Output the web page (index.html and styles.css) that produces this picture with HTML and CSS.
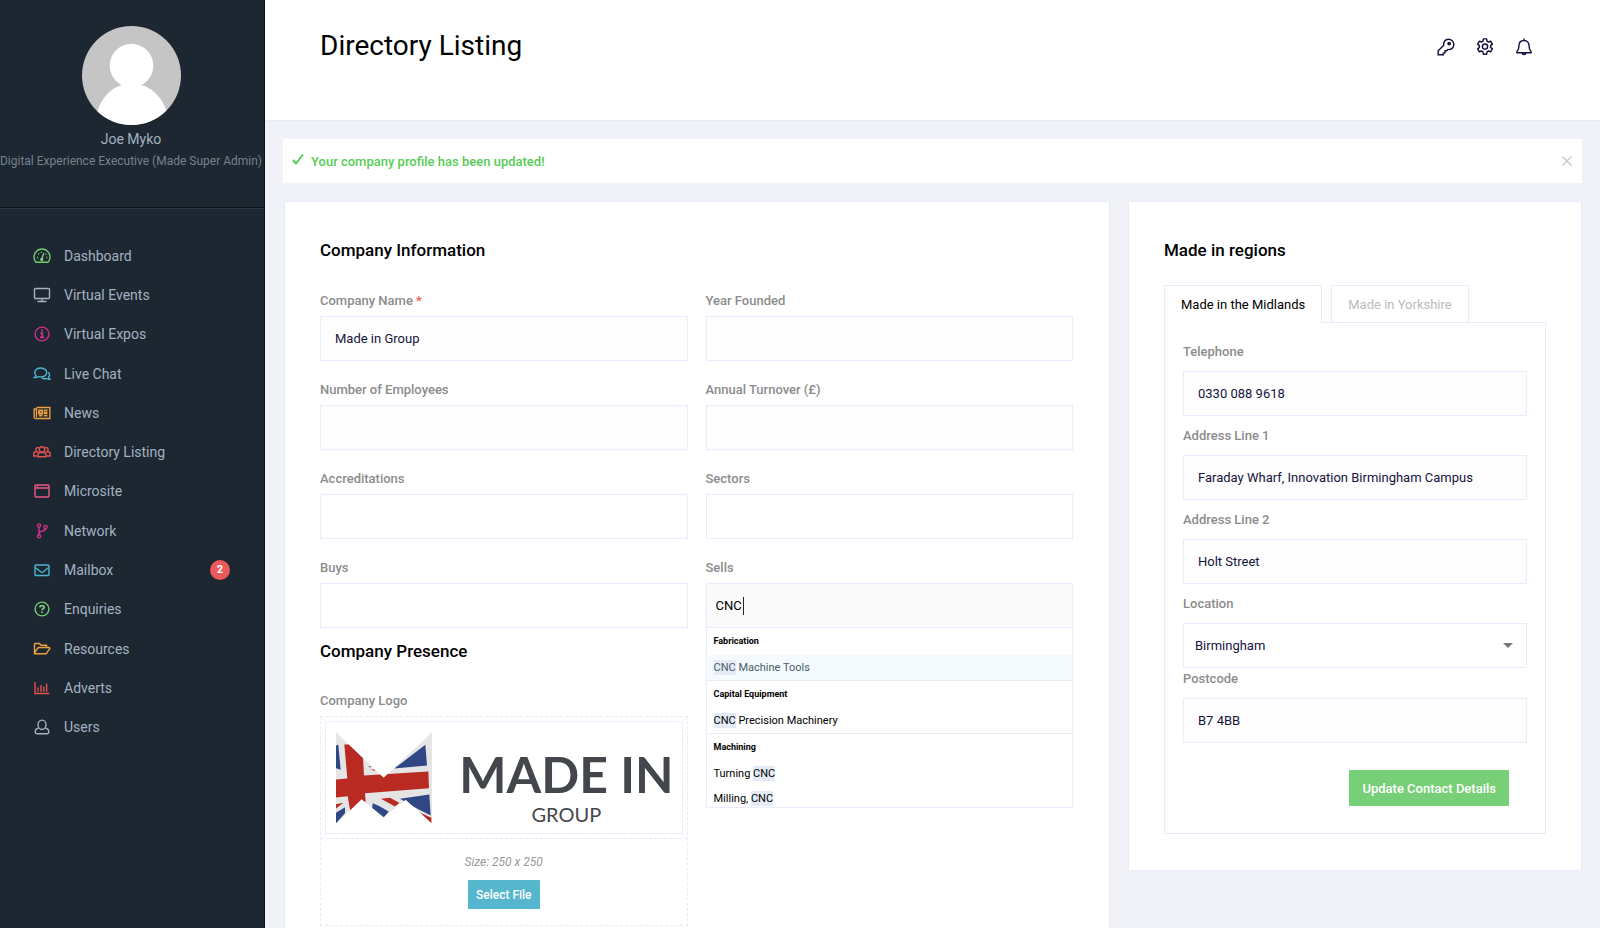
FILE: index.html
```html
<!DOCTYPE html>
<html lang="en">
<head>
  <meta charset="UTF-8" />
  <meta name="viewport" content="width=device-width, initial-scale=1.0" />
  <title>Directory Listing</title>
  <link rel="stylesheet" href="styles.css">
</head>
<body>
  <aside class="sidebar">
    <div class="profile">
      <svg class="avatar" viewBox="0 0 100 100" aria-hidden="true">
        <clipPath id="avatarClip"><circle cx="50" cy="50" r="50"/></clipPath>
        <g clip-path="url(#avatarClip)">
          <rect width="100" height="100" fill="#c5c5c5"/>
          <circle cx="50" cy="40" r="22" fill="#fff"/>
          <path d="M15 88C20 70 33 58 50 58s31 12 36 30v14H15z" fill="#fff"/>
        </g>
      </svg>
      <div class="profile-name">Joe Myko</div>
      <div class="profile-role">Digital Experience Executive (Made Super Admin)</div>
    </div>
    <nav class="menu">
      <a href="#" class="green">
        <svg viewBox="0 0 18 18"><path d="M3 15.300h12a8 8 0 1 0-12 0z"/><path d="M8.500 13l2.300-7M4 10.500h1M13.300 10.500h1M5.300 6.500l.8.8M8.400 4.800v1M12.600 7.400l.7-.7" /><circle cx="8.800" cy="12.500" r="1"/></svg>
        <span>Dashboard</span>
      </a>
      <a href="#">
        <svg viewBox="0 0 18 18"><rect x="1.500" y="2.500" width="15" height="10" rx="1"/><path d="M9 12.500v3M4.500 15.500h9"/></svg>
        <span>Virtual Events</span>
      </a>
      <a href="#" class="magenta">
        <svg viewBox="0 0 18 18"><circle cx="9" cy="9" r="6.900"/><path d="M7.300 8h2v4.500M7 12.400h4.200" stroke-width="1.700"/><path d="M8.200 5.500h1.800" stroke-width="2"/></svg>
        <span>Virtual Expos</span>
      </a>
      <a href="#" class="cyan">
        <svg viewBox="0 0 18 18"><path d="M1.300 12.600c.9-.6 1.400-1.300 1.600-2.200C.4 7.400 2.600 3 7.500 3s6.600 3 6.100 5.300c-.6 2.800-4.200 4.200-8 3.300-1.200.7-2.500 1.100-4.300 1z"/><path d="M15 7.300c2 1.500 2 3.500.5 5 .2.900.7 1.500 1.500 2.100-1.500 0-2.600-.2-3.600-.9-1.800.4-3.600.1-4.800-.7"/></svg>
        <span>Live Chat</span>
      </a>
      <a href="#" class="orange">
        <svg viewBox="0 0 18 18"><path d="M3.500 3.500h13.300v11H2.500a1.300 1.300 0 0 1-1.300-1.300V5h2.300v8"/><path d="M6 6.500h3.500v3H6zM11 6.500h3.500M11 9h3.500M6 11.700h3.500M11 11.700h3.500" stroke-width="1.800"/></svg>
        <span>News</span>
      </a>
      <a href="#" class="red">
        <svg viewBox="0 0 18 18"><circle cx="9" cy="6.500" r="2.700"/><path d="M5 13.800V12c0-1.500 1-2.500 2.300-2.500h3.400c1.300 0 2.300 1 2.300 2.500v1.800z"/><path d="M5 8.600a2 2 0 1 1 .9-3.700M13 8.600a2 2 0 1 0-.9-3.700M4.500 13H.8v-2.200c0-1.200.8-2 2-2h2M13.500 13h3.700v-2.200c0-1.200-.8-2-2-2h-2"/></svg>
        <span>Directory Listing</span>
      </a>
      <a href="#" class="pink">
        <svg viewBox="0 0 18 18"><rect x="2" y="3" width="14" height="12" rx="1"/><path d="M2 6h14M4 4.500h1"/></svg>
        <span>Microsite</span>
      </a>
      <a href="#" class="magenta">
        <svg viewBox="0 0 18 18"><circle cx="6" cy="3.500" r="1.600"/><circle cx="6" cy="14.300" r="1.600"/><circle cx="12.500" cy="5" r="1.600"/><path d="M6 5v7.700M12.500 6.600c0 3.400-6.500 1.600-6.500 5"/></svg>
        <span>Network</span>
      </a>
      <a href="#" class="cyan">
        <svg viewBox="0 0 18 18"><rect x="2" y="4" width="14" height="10.500" rx="1"/><path d="M2.300 6.500L8 11q1 .8 2 0l5.700-4.500"/></svg>
        <span>Mailbox</span>
        <b class="badge">2</b>
      </a>
      <a href="#" class="green">
        <svg viewBox="0 0 18 18"><circle cx="9" cy="9" r="6.900"/><path d="M6.800 7.300C7 5 11.200 4.900 11.200 7.300c0 1.500-2.200 1.400-2.200 3M9 11.600v1.500" stroke-width="1.800"/></svg>
        <span>Enquiries</span>
      </a>
      <a href="#" class="orange">
        <svg viewBox="0 0 18 18"><path d="M13.500 7.500V5.300H8L6.300 3.500H2.500a1 1 0 0 0-1 1v9.300h11.700l3.600-5.300q.2-1-.8-1H6.200c-.8 0-1.200.2-1.600.8L1.500 13"/></svg>
        <span>Resources</span>
      </a>
      <a href="#" class="red">
        <svg viewBox="0 0 18 18"><path d="M2 3v11.500h14.300M5 8.500v4.300M8 6v6.800M10.800 7.500v5.300M13.600 4.500v8.300"/></svg>
        <span>Adverts</span>
      </a>
      <a href="#">
        <svg viewBox="0 0 18 18"><ellipse cx="9" cy="6.800" rx="4" ry="4.700"/><path d="M5.500 10.300C3.300 10.600 2.200 12 2.200 14c0 1.200.7 1.700 1.500 1.700h10.600c.8 0 1.500-.5 1.500-1.700 0-2-1.100-3.400-3.300-3.700"/></svg>
        <span>Users</span>
      </a>
    </nav>
  </aside>

  <div class="page">
    <header class="topbar">
      <h1>Directory Listing</h1>
      <div class="topbar-actions">
        <button type="button" aria-label="Password">
          <svg viewBox="0 0 20 20"><path d="M1.300 18.700v-4.500l6.200-6.200C6.800 4.500 9 1.300 12.700 1.300c3.300 0 6 2.500 6 5.800 0 3.700-2.900 6.300-6.600 5.700l-1.300 1.400H9v1.900l-1.200.9H7v1.700z"/><circle cx="13.500" cy="6.200" r="1.300" fill="#14143c"/></svg>
        </button>
        <button type="button" aria-label="Settings">
          <svg viewBox="0 0 20 20"><path d="M8.200 1h3.600l.5 2.600 1.500.9 2.500-.9 1.900 3.200-2 1.700v1.900l2 1.700-1.900 3.200-2.500-.9-1.500.9-.5 2.700H8.200l-.5-2.700-1.500-.9-2.500.9-1.900-3.200 2-1.700V8.500l-2-1.700 1.900-3.200 2.500.9 1.500-.9z" stroke-linejoin="round"/><circle cx="10" cy="9.500" r="2.900"/></svg>
        </button>
        <button type="button" aria-label="Notifications">
          <svg viewBox="0 0 20 20"><path d="M10 .5v2M2.300 16.300h15.400c.5-.6.3-1.200-.2-1.700-1.600-1.500-1.800-3-1.800-5.500 0-3.600-2-6.400-5.700-6.400S4.300 5.500 4.300 9.100c0 2.500-.2 4-1.800 5.500-.5.500-.7 1.100-.2 1.700zM8 16.500a2 2 0 0 0 4 0"/></svg>
        </button>
      </div>
    </header>

    <main class="content">
      <div class="alert" role="status">
        <svg class="tick" viewBox="0 0 12 12"><path d="M1 7l3 3.500L11 1.500" /></svg>
        <span>Your company profile has been updated!</span>
        <button type="button" class="close" aria-label="Close">
          <svg viewBox="0 0 12 12"><path d="M1.500 1.500l9 9M10.500 1.500l-9 9"/></svg>
        </button>
      </div>

      <div class="columns">
        <section class="card">
          <h2>Company Information</h2>
          <form class="fields">
            <div class="field">
              <label for="name">Company Name <span class="required">*</span></label>
              <input type="text" id="name" value="Made in Group">
            </div>
            <div class="field">
              <label for="founded">Year Founded</label>
              <input type="text" id="founded">
            </div>
            <div class="field">
              <label for="employees">Number of Employees</label>
              <input type="text" id="employees">
            </div>
            <div class="field">
              <label for="turnover">Annual Turnover (£)</label>
              <input type="text" id="turnover">
            </div>
            <div class="field">
              <label for="accreditations">Accreditations</label>
              <input type="text" id="accreditations" class="tags">
            </div>
            <div class="field">
              <label for="sectors">Sectors</label>
              <input type="text" id="sectors" class="tags">
            </div>
            <div class="field">
              <label for="buys">Buys</label>
              <input type="text" id="buys" class="tags">
            </div>
            <div class="field sells">
              <label for="sells">Sells</label>
              <input type="text" id="sells" class="tags active" value="CNC">
              <i class="caret"></i>
              <div class="suggestions">
                <div class="group">
                  <h3>Fabrication</h3>
                  <div class="suggestion selected"><mark>CNC</mark> Machine Tools</div>
                </div>
                <div class="group">
                  <h3>Capital Equipment</h3>
                  <div class="suggestion"><mark>CNC</mark> Precision Machinery</div>
                </div>
                <div class="group">
                  <h3>Machining</h3>
                  <div class="suggestion">Turning <mark>CNC</mark></div>
                  <div class="suggestion">Milling, <mark>CNC</mark></div>
                </div>
              </div>
            </div>
          </form>

          <h2 class="presence">Company Presence</h2>
          <div class="logo-field">
            <div class="label">Company Logo</div>
            <div class="dropzone">
              <div class="preview">
                <div class="logo-frame">
                  <svg class="flag" viewBox="78 125 288 275" aria-hidden="true">
                    <clipPath id="flagClip"><path d="M78 125L221 262 366 125V400L287 328 221 380 155 326 78 400z"/></clipPath>
                    <g clip-path="url(#flagClip)">
                      <path d="M78 125h288v275H78z" fill="#e5e5e5"/>
                      <path d="M78 165l7-2 7 75-14-5zM253 234l93-71 5 62zM270 325l88-13 4 63-40-20zM188 338l18 8 30 17-16 20-34-24zM78 367l27-17v18l-27 30zM176 227l9 1-7 3z" fill="#2f4785"/>
                      <path d="M103 162h14l42 40 3 53 193-12 2 50-192 15 2 25-46 30-8-46-35 4v-54l34-3zM78 341l22-4-22 17zM213 325l27-3 28 15-13 11zM330 366l34 16v17zM181 238l14-1v4z" fill="#b92a22"/>
                    </g>
                  </svg>
                  <div class="wordmark">
                    <strong>MADE IN</strong>
                    <span>GROUP</span>
                  </div>
                </div>
              </div>
              <div class="upload">
                <em>Size: 250 x 250</em>
                <button type="button" class="btn-file">Select File</button>
              </div>
            </div>
          </div>
        </section>

        <section class="card regions">
          <h2>Made in regions</h2>
          <div class="tabs" role="tablist">
            <button type="button" role="tab" aria-selected="true" class="tab current">Made in the Midlands</button>
            <button type="button" role="tab" aria-selected="false" class="tab">Made in Yorkshire</button>
          </div>
          <form class="panel">
            <label for="telephone">Telephone</label>
            <input type="text" id="telephone" value="0330 088 9618">
            <label for="address1">Address Line 1</label>
            <input type="text" id="address1" value="Faraday Wharf, Innovation Birmingham Campus">
            <label for="address2">Address Line 2</label>
            <input type="text" id="address2" value="Holt Street">
            <label for="location">Location</label>
            <div class="select">
              <select id="location"><option>Birmingham</option></select>
            </div>
            <label for="postcode">Postcode</label>
            <input type="text" id="postcode" value="B7 4BB">
            <button type="button" class="btn-update">Update Contact Details</button>
          </form>
        </section>
      </div>
    </main>
  </div>
</body>
</html>
```

FILE: styles.css
```css
* {
  box-sizing: border-box;
}
body {
  display: flex;
  min-height: 100vh;
  margin: 0;
  background: #f0f2f7;
  color: #000;
  font-family: Roboto, "Liberation Sans", sans-serif;
  font-size: 13px;
}
h1, h2, h3 {
  margin: 0;
  font-weight: 500;
}
button, input, select {
  font-family: inherit;
  font-size: 13px;
}
button {
  cursor: pointer;
}
svg {
  display: block;
  fill: none;
}

/* sidebar */
.sidebar {
  flex: none;
  width: 265px;
  background: #1c2731;
  border-right: 1px solid #0b101f;
  color: #a3b1c2;
}
.profile {
  display: flex;
  flex-direction: column;
  align-items: center;
  height: 208px;
  padding: 26px 2px 0 0;
  border-bottom: 1px solid #0e161d;
  box-shadow: 0 1px 0 #2b3844;
}
.avatar {
  width: 99px;
  height: 99px;
}
.profile-name {
  margin-top: 4px;
  font-size: 14px;
  line-height: 20px;
}
.profile-role {
  color: #75818f;
  font-size: 12px;
  line-height: 24px;
  white-space: nowrap;
}
.menu {
  display: grid;
  grid-auto-rows: 1fr;
  height: 511px;
  margin-top: 28px;
}
.menu a {
  display: flex;
  align-items: center;
  padding: 0 34px 0 33px;
  color: #a3b1c2;
  font-size: 14px;
  text-decoration: none;
}
.menu svg {
  width: 18px;
  height: 18px;
  margin-right: 13px;
  stroke: #a3b1c2;
  stroke-width: 1.4;
}
.menu .green svg { stroke: #74cf74; }
.menu .magenta svg { stroke: #d6308a; }
.menu .cyan svg { stroke: #4eb5d0; }
.menu .orange svg { stroke: #eda13e; }
.menu .red svg { stroke: #e25350; }
.menu .pink svg { stroke: #ea5a80; }
.badge {
  width: 20px;
  height: 20px;
  margin-left: auto;
  border-radius: 50%;
  background: #ea5a5d;
  color: #fff;
  font-size: 11px;
  line-height: 20px;
  text-align: center;
}

/* page */
.page {
  display: flex;
  flex: 1;
  flex-direction: column;
  min-width: 0;
}
.topbar {
  display: flex;
  justify-content: space-between;
  height: 121px;
  padding: 28px 66px 0 55px;
  background: #fff;
  border-bottom: 1px solid #e8ebfb;
}
h1 {
  font-size: 28px;
  font-weight: 400;
  line-height: 36px;
}
.topbar-actions {
  display: flex;
  gap: 19px;
  padding-top: 9px;
}
.topbar-actions button {
  width: 20px;
  height: 20px;
  padding: 1px;
  border: 0;
  background: none;
}
.topbar-actions svg {
  stroke: #14143c;
  stroke-width: 1.6;
}
.content {
  display: flex;
  flex: 1;
  flex-direction: column;
  padding: 18px 18px 0;
}
.alert {
  display: flex;
  align-items: center;
  height: 44px;
  padding: 0 9px;
  background: #fff;
  color: #58cb58;
  font-weight: 500;
}
.tick {
  width: 12px;
  height: 12px;
  margin: 0 7px 4px 0;
  stroke: #58cb58;
  stroke-width: 2;
}
.close {
  width: 12px;
  height: 12px;
  margin-left: auto;
  padding: 0;
  border: 0;
  background: none;
}
.close svg {
  stroke: #c4c4c4;
  stroke-width: 1.3;
}
.columns {
  display: grid;
  flex: 1;
  grid-template-columns: 826fr 454fr;
  align-items: start;
  gap: 18px;
  padding: 18px 0 0 1px;
}
.card {
  align-self: stretch;
  padding: 36px 36px 0 35px;
  background: #fff;
  border: 1px solid #e8ebfb;
  border-bottom: 0;
}
h2 {
  margin-bottom: 28px;
  font-size: 17px;
  line-height: 24px;
}
label, .label {
  display: block;
  margin-bottom: 5px;
  color: #8c8c8c;
  font-size: 13px;
  font-weight: 500;
  line-height: 21px;
}
.required {
  color: #ee5555;
}
input, select {
  display: block;
  width: 100%;
  height: 45px;
  padding: 0 14px;
  border: 1px solid #e8ecfd;
  border-radius: 0;
  outline: 0;
  background: #fdfdfd;
  color: #14143c;
}
.fields {
  display: grid;
  grid-template-columns: 1fr 1fr;
  gap: 18px;
}
input.tags {
  height: 45px;
  background: #fff;
}

/* sells autocomplete */
.sells {
  position: relative;
}
input.active {
  padding: 0 9px;
  background: #fafafa;
  color: #000;
}
.caret {
  position: absolute;
  top: 40px;
  left: 37px;
  width: 1px;
  height: 18px;
  background: #222;
}
.suggestions {
  position: absolute;
  top: 100%;
  right: 0;
  left: 0;
  max-height: 180px;
  overflow: hidden;
  background: #fff;
  border: 1px solid #e8ecfd;
  border-top: 0;
}
.group + .group {
  border-top: 1px solid #e8ecf5;
}
h3 {
  padding: 0 7px;
  font-size: 9px;
  font-weight: 700;
  line-height: 27px;
}
.suggestion {
  padding: 0 7px;
  font-size: 11px;
  line-height: 25px;
}
.suggestion.selected {
  background: #f5fafe;
  color: #495c68;
}
mark {
  padding: 1px 0;
  background: #e4ebf6;
  color: inherit;
}

/* logo upload */
.presence {
  margin: 11px 0 27px;
}
.logo-field {
  width: calc(50% - 9px);
}
.dropzone {
  border: 1px dashed #e8ebfb;
}
.preview {
  padding: 4px;
  border-bottom: 1px dashed #e8ebfb;
}
.logo-frame {
  display: flex;
  align-items: center;
  justify-content: space-between;
  height: 113px;
  padding: 0 8px 0 10px;
  border: 1px solid #e8effd;
}
.flag {
  width: 96px;
  height: 92px;
}
.wordmark {
  color: #43474b;
  font-family: Lato, sans-serif;
  text-align: center;
}
.wordmark strong {
  display: block;
  margin-top: 12px;
  font-size: 50px;
  font-weight: 700;
  line-height: 60px;
}
.wordmark span {
  display: block;
  font-size: 20px;
  line-height: 20px;
}
.upload {
  display: flex;
  flex-direction: column;
  align-items: center;
  padding: 13px 0 16px;
}
.upload em {
  color: #999;
  font-size: 12px;
  line-height: 20px;
}
.btn-file {
  height: 29px;
  margin-top: 8px;
  padding: 0 8px;
  border: 0;
  border-radius: 1px;
  background: #56b6cd;
  color: #fff;
  font-size: 12px;
  font-weight: 500;
}

/* regions */
.regions {
  align-self: start;
  padding: 36px 35px 36px 35px;
  border-bottom: 1px solid #e8ebfb;
}
.regions h2 {
  margin-bottom: 23px;
}
.tabs {
  display: flex;
  gap: 9px;
}
.tab {
  height: 37px;
  padding: 0 16px;
  border: 1px solid #e8ebfb;
  border-bottom: 0;
  background: #fff;
  color: #bbb;
}
.tab.current {
  z-index: 1;
  height: 38px;
  margin-bottom: -1px;
  color: #000;
}
.panel {
  padding: 18px 18px 27px;
  border: 1px solid #e8ebfb;
}
.panel label {
  margin-bottom: 9px;
}
.panel input {
  margin-bottom: 9px;
}
.select {
  position: relative;
}
.select::after {
  content: "";
  position: absolute;
  top: 20px;
  right: 14px;
  border: 5px solid transparent;
  border-top-color: #777;
  border-bottom: 0;
}
select {
  padding: 0 11px;
  appearance: none;
  background: #fff;
}
.btn-update {
  display: block;
  height: 36px;
  margin: 27px 18px 0 auto;
  padding: 0 13px;
  border: 0;
  border-radius: 1px;
  background: #77cf77;
  color: #fff;
  font-weight: 500;
}
```
